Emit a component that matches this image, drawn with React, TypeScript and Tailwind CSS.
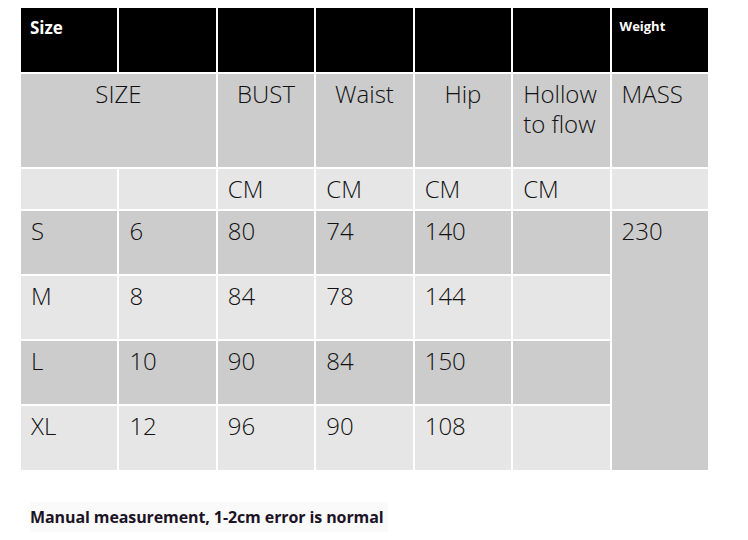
const rows = [
    { size: 'S', num: '6', bust: '80', waist: '74', hip: '140', bg: 'bg-[#cccccc]' },
    { size: 'M', num: '8', bust: '84', waist: '78', hip: '144', bg: 'bg-[#e6e6e6]' },
    { size: 'L', num: '10', bust: '90', waist: '84', hip: '150', bg: 'bg-[#cccccc]' },
    { size: 'XL', num: '12', bust: '96', waist: '90', hip: '108', bg: 'bg-[#e6e6e6]' },
];

const thin = "font-['Open_Sans',sans-serif] font-light text-[24px] leading-[30px] text-[#111111]";

export default function App() {
    return (
        <div className="w-[748px] h-[540px] bg-white pt-2 pl-[21px]">
            <div className="grid w-[687px] grid-cols-7 grid-rows-[64px_93px_40px_63px_63px_63px_64px] gap-[2px]">
                {/* black header row */}
                <div className="bg-black pl-[9px] pt-[7px] font-['Open_Sans',sans-serif] text-[17px] font-bold text-white">Size</div>
                <div className="bg-black" />
                <div className="bg-black" />
                <div className="bg-black" />
                <div className="bg-black" />
                <div className="bg-black" />
                <div className="bg-black pl-[8px] pt-[9px] font-['Open_Sans',sans-serif] text-[13px] font-bold text-white">Weight</div>

                {/* title row */}
                <div className={`col-span-2 bg-[#cccccc] pt-[5px] text-center ${thin}`}>SIZE</div>
                <div className={`bg-[#cccccc] pt-[5px] text-center ${thin}`}>BUST</div>
                <div className={`bg-[#cccccc] pt-[5px] text-center ${thin}`}>Waist</div>
                <div className={`bg-[#cccccc] pt-[5px] text-center ${thin}`}>Hip</div>
                <div className={`bg-[#cccccc] pl-[10px] pt-[5px] ${thin}`}>Hollow<br />to flow</div>
                <div className={`bg-[#cccccc] pl-[10px] pt-[5px] ${thin}`}>MASS</div>

                {/* unit row */}
                <div className="bg-[#e6e6e6]" />
                <div className="bg-[#e6e6e6]" />
                <div className={`bg-[#e6e6e6] pl-[10px] pt-[5px] ${thin}`}>CM</div>
                <div className={`bg-[#e6e6e6] pl-[10px] pt-[5px] ${thin}`}>CM</div>
                <div className={`bg-[#e6e6e6] pl-[10px] pt-[5px] ${thin}`}>CM</div>
                <div className={`bg-[#e6e6e6] pl-[10px] pt-[5px] ${thin}`}>CM</div>
                <div className="bg-[#e6e6e6]" />

                {rows.map((r, i) => (
                    <div key={r.size} className="contents">
                        <div className={`${r.bg} pl-[10px] pt-[5px] ${thin}`}>{r.size}</div>
                        <div className={`${r.bg} pl-[10px] pt-[5px] ${thin}`}>{r.num}</div>
                        <div className={`${r.bg} pl-[10px] pt-[5px] ${thin}`}>{r.bust}</div>
                        <div className={`${r.bg} pl-[10px] pt-[5px] ${thin}`}>{r.waist}</div>
                        <div className={`${r.bg} pl-[10px] pt-[5px] ${thin}`}>{r.hip}</div>
                        <div className={r.bg} />
                        {i === 0 && (
                            <div className={`row-span-4 bg-[#cccccc] pl-[10px] pt-[5px] ${thin}`}>230</div>
                        )}
                    </div>
                ))}
            </div>

            <div className="mt-[32px] ml-[9px] w-[358px] bg-[#fafafa] py-[5px] font-['Open_Sans',sans-serif] text-[16px] font-bold leading-[20px] tracking-[-0.1px] text-[#1c1426]">
                Manual measurement, 1-2cm error is normal
            </div>
        </div>
    );
}
